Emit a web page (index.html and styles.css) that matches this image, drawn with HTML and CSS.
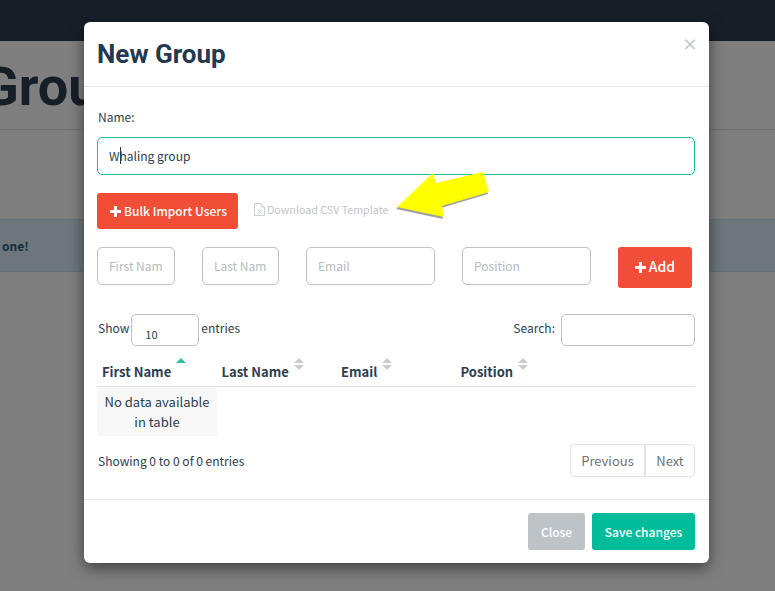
FILE: index.html
```html
<!DOCTYPE html>
<html lang="en">
<head>
    <meta charset="UTF-8">
    <meta name="viewport" content="width=device-width, initial-scale=1.0">
    <title>Groups</title>
    <link rel="stylesheet" href="styles.css">
</head>
<body>
    <div class="topbar"></div>
    <div class="page-head">
        <h1>Group</h1>
    </div>
    <div class="alert">one!</div>
    <div class="backdrop"></div>

    <div class="modal">
        <div class="modal-header">
            <h2>New Group</h2>
            <span class="close-x">×</span>
        </div>
        <div class="modal-body">
            <label class="name-label">Name:</label>
            <div class="name-input"><span>W</span><i class="caret"></i><span>haling group</span></div>

            <div class="import-row">
                <button class="btn btn-red btn-import"><span class="plus"></span>Bulk Import Users</button>
                <a class="csv-link">
                    <svg class="csv-icon" width="11" height="13" viewBox="0 0 11 13">
                        <path d="M.5.5h6.500l3.500 3.500v8.500h-10z M7 .5v3.500h3.500" fill="none" stroke="#ccd0d4"/>
                        <path d="M3.500 6l4 5M7.500 6l-4 5" fill="none" stroke="#ccd0d4"/>
                    </svg>
                    Download CSV Template
                </a>
            </div>

            <div class="add-row">
                <input class="field field-first" placeholder="First Name">
                <input class="field field-last" placeholder="Last Name">
                <input class="field field-email" placeholder="Email">
                <input class="field field-pos" placeholder="Position">
                <button class="btn btn-red btn-add"><span class="plus"></span>Add</button>
            </div>

            <div class="table-top">
                <div class="show">Show <span class="len-select">10</span> entries</div>
                <div class="search">Search: <input class="search-input"></div>
            </div>

            <div class="table">
                <div class="thead">
                    <div class="th"><span>First Name</span><span class="sort sort-asc"></span></div>
                    <div class="th"><span>Last Name</span><span class="sort"></span></div>
                    <div class="th"><span>Email</span><span class="sort"></span></div>
                    <div class="th"><span>Position</span><span class="sort"></span></div>
                </div>
                <div class="empty">No data available in table</div>
            </div>

            <div class="table-bottom">
                <div class="info">Showing 0 to 0 of 0 entries</div>
                <div class="pager">
                    <span class="page-btn page-prev">Previous</span>
                    <span class="page-btn page-next">Next</span>
                </div>
            </div>
        </div>
        <div class="modal-footer">
            <button class="btn btn-grey">Close</button>
            <button class="btn btn-green">Save changes</button>
        </div>
    </div>

    <svg class="arrow" width="100" height="54" viewBox="0 0 100 54">
        <polygon points="2,36 38,2 41,12 88,1 94,21 47,35 49,46" fill="#8a8a8a" transform="translate(-1,2)" opacity="0.8"/>
        <polygon points="2,36 38,2 41,12 88,1 94,21 47,35 49,46" fill="#ffff00"/>
    </svg>
</body>
</html>
```

FILE: styles.css
```css
* {
    box-sizing: border-box;
}

body {
    margin: 0;
    height: 591px;
    overflow: hidden;
    background: #fff;
    font-family: "Noto Sans CJK SC", "Noto Sans", sans-serif;
    font-size: 12px;
    color: #2c3e50;
}

.topbar {
    height: 41px;
    background: #2c3e50;
}

.page-head {
    height: 89px;
    border-bottom: 1px solid #e0e0e0;
    overflow: hidden;
}

.page-head h1 {
    margin: 14px 0 0 -18px;
    font-family: Roboto, sans-serif;
    font-size: 54px;
    font-weight: 700;
    line-height: 64px;
    color: #2c3e50;
}

.alert {
    height: 53px;
    margin-top: 89px;
    padding: 18px 0 0 2px;
    background: #d9edf7;
    border-top: 1px solid #c6e2ee;
    border-bottom: 1px solid #c6e2ee;
    color: #2c5a7a;
    font-weight: 700;
    line-height: 16px;
}

.backdrop {
    position: absolute;
    top: 0;
    left: 0;
    width: 775px;
    height: 591px;
    background: rgba(0, 0, 0, 0.5);
}

.modal {
    position: absolute;
    top: 22px;
    left: 84px;
    width: 625px;
    height: 541px;
    background: #fff;
    border-radius: 6px;
    box-shadow: 0 5px 15px rgba(0, 0, 0, 0.5);
}

.modal-header {
    position: relative;
    height: 65px;
    padding: 15px 14px 0 13px;
    border-bottom: 1px solid #e5e5e5;
}

.modal-header h2 {
    margin: 0;
    font-family: Roboto, sans-serif;
    font-size: 26px;
    font-weight: 700;
    line-height: 34px;
    color: #24394d;
}

.close-x {
    position: absolute;
    top: 11px;
    right: 14px;
    font-size: 16px;
    font-weight: 700;
    line-height: 20px;
    color: #c5c9cd;
    margin-right: -3px;
}

.modal-body {
    height: 412px;
    padding: 21px 14px 0 13px;
}

.name-label {
    display: block;
    padding-left: 1px;
    line-height: 18px;
}

.name-input {
    display: flex;
    align-items: center;
    height: 38px;
    margin-top: 11px;
    padding: 0 0 2px 11px;
    border: 1px solid #1abc9c;
    border-radius: 5px;
}

.caret {
    width: 1px;
    height: 17px;
    margin-right: -1px;
    background: #2c3e50;
}

.import-row {
    display: flex;
    align-items: center;
    margin-top: 18px;
}

.btn {
    padding: 0;
    border: none;
    border-radius: 3px;
    color: #fff;
    font-family: inherit;
    font-size: 12px;
    font-weight: 500;
}

.btn-red {
    background: #f04e37;
}

.plus {
    display: inline-block;
    width: 11px;
    height: 11px;
    margin-right: 3px;
    vertical-align: -1px;
    background:
        linear-gradient(#fff, #fff) center / 100% 3px no-repeat,
        linear-gradient(#fff, #fff) center / 3px 100% no-repeat;
}

.btn-import {
    width: 141px;
    height: 36px;
    padding: 0 0 1px 2px;
}

.csv-link {
    display: flex;
    align-items: center;
    gap: 2px;
    margin: -4px 0 0 16px;
    font-size: 10.700px;
    color: #bfc4c9;
}

.add-row {
    display: flex;
    align-items: flex-start;
    margin-top: 18px;
}

.field {
    height: 38px;
    padding: 0 11px 2px;
    border: 1px solid #bdc3c7;
    border-radius: 5px;
    font-family: inherit;
    font-size: 12px;
    color: #2c3e50;
}

.field::placeholder {
    color: #b5bcc3;
}

.field-first {
    width: 78px;
}

.field-last {
    width: 77px;
    margin-left: 27px;
}

.field-email {
    width: 129px;
    margin-left: 27px;
}

.field-pos {
    width: 129px;
    margin-left: 27px;
}

.btn-add {
    width: 74px;
    height: 41px;
    margin-left: 27px;
    padding-bottom: 3px;
    font-size: 14px;
}

.table-top {
    display: flex;
    justify-content: space-between;
    align-items: flex-start;
    margin-top: 26px;
}

.show {
    display: flex;
    align-items: flex-start;
    gap: 2px;
    padding-left: 1px;
    line-height: 28px;
}

.len-select {
    width: 68px;
    height: 32px;
    padding: 10px 0 0 13px;
    border: 1px solid #bdc3c7;
    border-radius: 5px;
    font-size: 11px;
    line-height: 18px;
}

.search {
    display: flex;
    align-items: flex-start;
    gap: 6px;
    line-height: 28px;
}

.search-input {
    width: 134px;
    height: 32px;
    border: 1px solid #bdc3c7;
    border-radius: 5px;
}

.thead {
    display: flex;
    height: 41px;
    border-bottom: 1px solid #dfe3e6;
}

.th {
    display: flex;
    width: 119.500px;
    padding: 16px 0 0 5px;
    font-size: 13px;
    font-weight: 700;
    line-height: 20px;
}

.sort {
    position: relative;
    width: 10px;
    height: 17px;
    margin: -4px 0 0 5px;
}

.sort::before,
.sort::after {
    content: "";
    position: absolute;
    left: 0;
    border-left: 5px solid transparent;
    border-right: 5px solid transparent;
}

.sort::before {
    top: 0;
    border-bottom: 5px solid #c8ccd0;
}

.sort::after {
    top: 7px;
    border-top: 5px solid #c8ccd0;
}

.sort-asc::before {
    border-bottom-color: #2fc0a4;
}

.sort-asc::after {
    display: none;
}

.empty {
    width: 120px;
    height: 49px;
    padding: 5px 6px 0;
    background: #f8f8f8;
    font-size: 13px;
    line-height: 20px;
    text-align: center;
}

.table-bottom {
    display: flex;
    justify-content: space-between;
    align-items: center;
    margin-top: 8px;
}

.info {
    padding-left: 1px;
}

.pager {
    display: flex;
    height: 33px;
    border: 1px solid #dfe3e6;
    border-radius: 4px;
    font-size: 13px;
}

.page-btn {
    line-height: 31px;
    text-align: center;
    color: #6f7478;
}

.page-prev {
    width: 73px;
}

.page-next {
    width: 50px;
    border-left: 2px solid #dfe3e6;
}

.modal-footer {
    display: flex;
    justify-content: flex-end;
    gap: 7px;
    height: 64px;
    padding: 13px 14px 0;
    border-top: 1px solid #e5e5e5;
}

.btn-grey {
    width: 57px;
    height: 37px;
    background: #bdc3c7;
}

.btn-green {
    width: 103px;
    height: 37px;
    background: #00bc9b;
}

.arrow {
    position: absolute;
    top: 171px;
    left: 395px;
}
```
